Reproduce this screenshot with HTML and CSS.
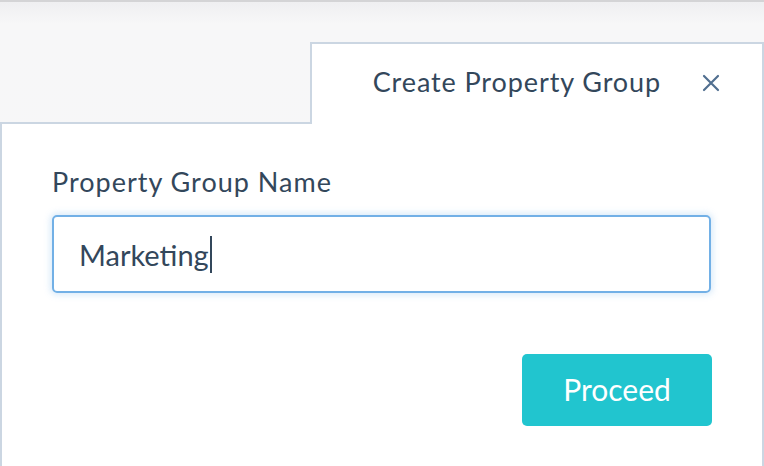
FILE: index.html
```html
<!DOCTYPE html>
<html>
<head>
<meta charset="utf-8">
<link rel="stylesheet" href="styles.css">
</head>
<body>
<div class="page">
  <div class="tabrow">
    <div class="spacer"></div>
    <div class="tab">
      <span class="tab-title">Create Property Group</span>
      <button class="close" aria-label="Close">
        <svg width="18" height="18" viewBox="0 0 18 18"><path d="M2 2 L16 16 M16 2 L2 16" stroke="#516f90" stroke-width="2.2" stroke-linecap="round"/></svg>
      </button>
    </div>
  </div>
  <div class="panel">
    <label class="label">Property Group Name</label>
    <div class="input"><span class="value">Marketing</span><span class="caret"></span></div>
    <div class="actions">
      <button class="proceed">Proceed</button>
    </div>
  </div>
</div>
</body>
</html>
```
FILE: styles.css
```css
html, body {
  margin: 0;
  padding: 0;
  height: 100%;
}
body {
  font-family: Lato, "Open Sans", sans-serif;
  color: #33475b;
  background: linear-gradient(#efeff1 2px, #f7f7f8 24px, #f7f7f7 100%);
  border-top: 2px solid #d4d4d6;
  box-sizing: border-box;
  overflow: hidden;
}
.page {
  padding-top: 40px;
  display: flex;
  flex-direction: column;
  height: 100%;
  box-sizing: border-box;
}
.tabrow {
  display: flex;
  height: 82px;
}
.spacer {
  width: 310px;
  border-bottom: 2px solid #cbd6e2;
}
.tab {
  flex: 1;
  background: #fff;
  border: 2px solid #cbd6e2;
  border-bottom: none;
  display: flex;
  align-items: center;
  justify-content: flex-end;
  padding-right: 40px;
  padding-bottom: 5px;
}
.tab-title {
  font-size: 27px;
  letter-spacing: 0.9px;
}
.close {
  border: none;
  background: none;
  padding: 0;
  margin-left: 39px;
  margin-top: 3px;
  width: 22px;
  height: 22px;
  display: flex;
  align-items: center;
  justify-content: center;
  cursor: pointer;
}
.panel {
  flex: 1;
  background: #fff;
  border-left: 2px solid #cbd6e2;
  border-right: 2px solid #cbd6e2;
  padding: 40px 51px 0 50px;
  display: flex;
  flex-direction: column;
}
.label {
  font-size: 27px;
  line-height: 36px;
  letter-spacing: 1px;
  display: block;
}
.input {
  margin-top: 15px;
  height: 74px;
  border: 2px solid #72b0e6;
  border-radius: 5px;
  box-shadow: 0 0 6px 2px rgba(120, 180, 235, 0.28);
  display: flex;
  align-items: center;
  padding-left: 25px;
  font-size: 29px;
}
.caret {
  display: inline-block;
  width: 2px;
  height: 37px;
  background: #33475b;
  margin-left: 1px;
}
.actions {
  display: flex;
  justify-content: flex-end;
  margin-top: 61px;
}
.proceed {
  width: 190px;
  height: 72px;
  margin-right: -1px;
  border: none;
  border-radius: 5px;
  background: #21c5cf;
  color: #fff;
  font-family: Lato, "Open Sans", sans-serif;
  font-size: 30px;
  padding-bottom: 3px;
  cursor: pointer;
}
```
